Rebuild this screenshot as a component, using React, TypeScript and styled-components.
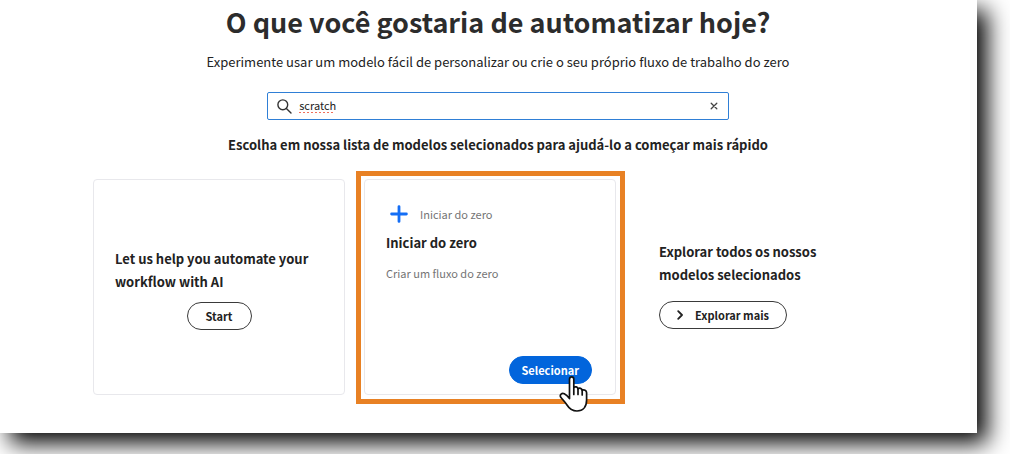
import React, { useState } from 'react';
import styled, { createGlobalStyle } from 'styled-components';

const GlobalStyle = createGlobalStyle`
  *, *::before, *::after { box-sizing: border-box; }
  body {
    margin: 0;
    background: #fff;
    color: #222;
    font-family: "Noto Sans CJK JP", "Open Sans", sans-serif;
    overflow: hidden;
  }
  button, input { font: inherit; color: inherit; }
`;

const Page = styled.div`
  padding: 0 33px 21px 0;
`;

const Panel = styled.main`
  display: flex;
  flex-direction: column;
  align-items: center;
  padding: 0 74px 38px 93px;
  background: #fff;
  box-shadow: 10px 10px 22px 0 #000;
`;

const Title = styled.h1`
  margin: 0;
  padding-top: 2px;
  font-size: 27px;
  line-height: 40px;
  font-weight: 700;
  color: #2c2c2c;
`;

const Subtitle = styled.p`
  margin: 10px 0 20px;
  font-size: 13px;
  line-height: 20px;
`;

const SearchBox = styled.form`
  display: flex;
  align-items: center;
  gap: 7px;
  width: 57%;
  height: 28px;
  padding: 0 8px 0 9px;
  border: 1px solid #2f7fd6;
  border-radius: 2px;
`;

const SearchInput = styled.input<{ $misspelt: boolean }>`
  flex: 1;
  min-width: 0;
  height: 24px;
  padding: 0 0 2px;
  border: 0;
  outline: 0;
  background: ${p =>
    p.$misspelt
      ? 'repeating-linear-gradient(90deg, #f0705c 0 2px, transparent 2px 4px) 0 18px / 34px 1px no-repeat'
      : 'none'};
  font-size: 11px;
  line-height: 22px;
`;

const ClearButton = styled.button`
  display: flex;
  padding: 2px;
  border: 0;
  background: none;
`;

const Prompt = styled.h2`
  margin: 15px 0 24px;
  font-size: 13px;
  line-height: 20px;
  font-weight: 700;
`;

const CardGrid = styled.div`
  align-self: stretch;
  display: grid;
  grid-template-columns: repeat(3, minmax(0, 1fr));
  gap: 19px;
  padding-right: 16px;
`;

const Card = styled.section<{ $plain?: boolean; $centered?: boolean }>`
  position: relative;
  display: flex;
  flex-direction: column;
  justify-content: ${p => (p.$centered ? 'center' : 'flex-start')};
  min-height: 216px;
  padding: ${p => (p.$plain ? '10px 21px 16px 23px' : p.$centered ? '12px 21px 10px' : '22px 21px 10px')};
  border: 1px solid ${p => (p.$plain ? 'transparent' : '#e8e8ec')};
  border-radius: 4px;
`;

const CardTitle = styled.h3`
  margin: 0;
  font-size: 13px;
  line-height: 23px;
  font-weight: 700;
`;

const CardTag = styled.div`
  display: flex;
  align-items: center;
  gap: 12px;
  margin-bottom: 5px;
  padding-left: 4px;
  font-size: 11px;
  line-height: 24px;
  color: #747474;
`;

const CardText = styled.p`
  margin: 7px 0 0;
  font-size: 11px;
  line-height: 24px;
  color: #747474;
`;

const PillButton = styled.button<{ $primary?: boolean; $align: string; $top: number }>`
  position: relative;
  display: flex;
  align-items: center;
  justify-content: center;
  gap: 11px;
  align-self: ${p => p.$align};
  min-width: 65px;
  height: 28px;
  margin-top: ${p => (p.$primary ? 'auto' : `${p.$top}px`)};
  margin-right: ${p => (p.$primary ? '2px' : '0')};
  padding: 0 ${p => (p.$primary ? 12 : 17)}px;
  border: 1px solid ${p => (p.$primary ? '#0265dc' : '#3a3a3a')};
  border-radius: 14px;
  background: ${p => (p.$primary ? '#0265dc' : '#fff')};
  color: ${p => (p.$primary ? '#fff' : '#222')};
  font-size: 11px;
  line-height: 20px;
  font-weight: 700;
  white-space: nowrap;
`;

const Highlight = styled.div`
  position: absolute;
  inset: -9px -10px -10px -9px;
  border: 5px solid #e88124;
  pointer-events: none;
`;

const Pointer = styled.svg`
  position: absolute;
  right: 2px;
  top: 18px;
  pointer-events: none;
`;

export default function App() {
  const [query, setQuery] = useState('scratch');
  return (
    <Page>
      <GlobalStyle />
      <Panel>
        <Title>O que você gostaria de automatizar hoje?</Title>
        <Subtitle>Experimente usar um modelo fácil de personalizar ou crie o seu próprio fluxo de trabalho do zero</Subtitle>
        <SearchBox role="search" onSubmit={e => e.preventDefault()}>
          <svg width="15" height="15" viewBox="0 0 15 15" fill="none" stroke="#333" strokeWidth="1.4" strokeLinecap="round" aria-hidden="true">
            <circle cx="5.8" cy="5.8" r="4.9" />
            <path d="M9.4 9.4 14 14" />
          </svg>
          <SearchInput
            aria-label="Pesquisar modelos"
            value={query}
            spellCheck={false}
            $misspelt={query === 'scratch'}
            onChange={e => setQuery(e.target.value)}
          />
          <ClearButton type="button" aria-label="Limpar" onClick={() => setQuery('')}>
            <svg width="8" height="8" viewBox="0 0 8 8" stroke="#444" strokeWidth="1.3" strokeLinecap="round">
              <path d="M1.2 1.2 6.8 6.8M6.8 1.2 1.2 6.8" />
            </svg>
          </ClearButton>
        </SearchBox>
        <Prompt>Escolha em nossa lista de modelos selecionados para ajudá-lo a começar mais rápido</Prompt>
        <CardGrid>
          <Card $centered>
            <CardTitle>Let us help you automate your workflow with AI</CardTitle>
            <PillButton type="button" $align="center" $top={9}>Start</PillButton>
          </Card>
          <Card>
            <CardTag>
              <svg width="18" height="18" viewBox="0 0 18 18" stroke="#146ef5" strokeWidth="2.8" strokeLinecap="round" aria-hidden="true">
                <path d="M9 1.6V16.4M1.6 9H16.4" />
              </svg>
              Iniciar do zero
            </CardTag>
            <CardTitle>Iniciar do zero</CardTitle>
            <CardText>Criar um fluxo do zero</CardText>
            <Highlight />
            <PillButton type="button" $primary $align="flex-end" $top={0}>
              Selecionar
              <Pointer width="30" height="38" viewBox="0 0 30 38" fill="#fff" stroke="#111" strokeWidth="1.7" strokeLinejoin="round" strokeLinecap="round" aria-hidden="true">
                <path d="M10.5 23.5V4.2C10.5 1 14.8 1 14.8 4.2V12.5C16.2 11.2 18.7 11.8 19 13.8C20.5 12.6 22.8 13.3 23.2 15.3C25 14.2 27.6 15.3 27.6 17.8V25C27.6 31.8 24 36 18 36C12.7 36 10.3 33.7 8 30C6.2 27 3.8 24.8 1.8 22.2C.2 19.6 3 17.7 5.3 18.8C7.4 19.8 9 21.5 10.5 23.5Z" />
                <path d="M14.8 12.5V19.5M19 13.8V19.5M23.2 15.3V20" fill="none" />
              </Pointer>
            </PillButton>
          </Card>
          <Card $plain $centered>
            <CardTitle>Explorar todos os nossos modelos selecionados</CardTitle>
            <PillButton type="button" $align="flex-start" $top={15}>
              <svg width="7" height="10" viewBox="0 0 7 10" fill="none" stroke="#222" strokeWidth="1.8" strokeLinecap="round" strokeLinejoin="round" aria-hidden="true">
                <path d="M1.2 1.2 5 5 1.2 8.8" />
              </svg>
              Explorar mais
            </PillButton>
          </Card>
        </CardGrid>
      </Panel>
    </Page>
  );
}
